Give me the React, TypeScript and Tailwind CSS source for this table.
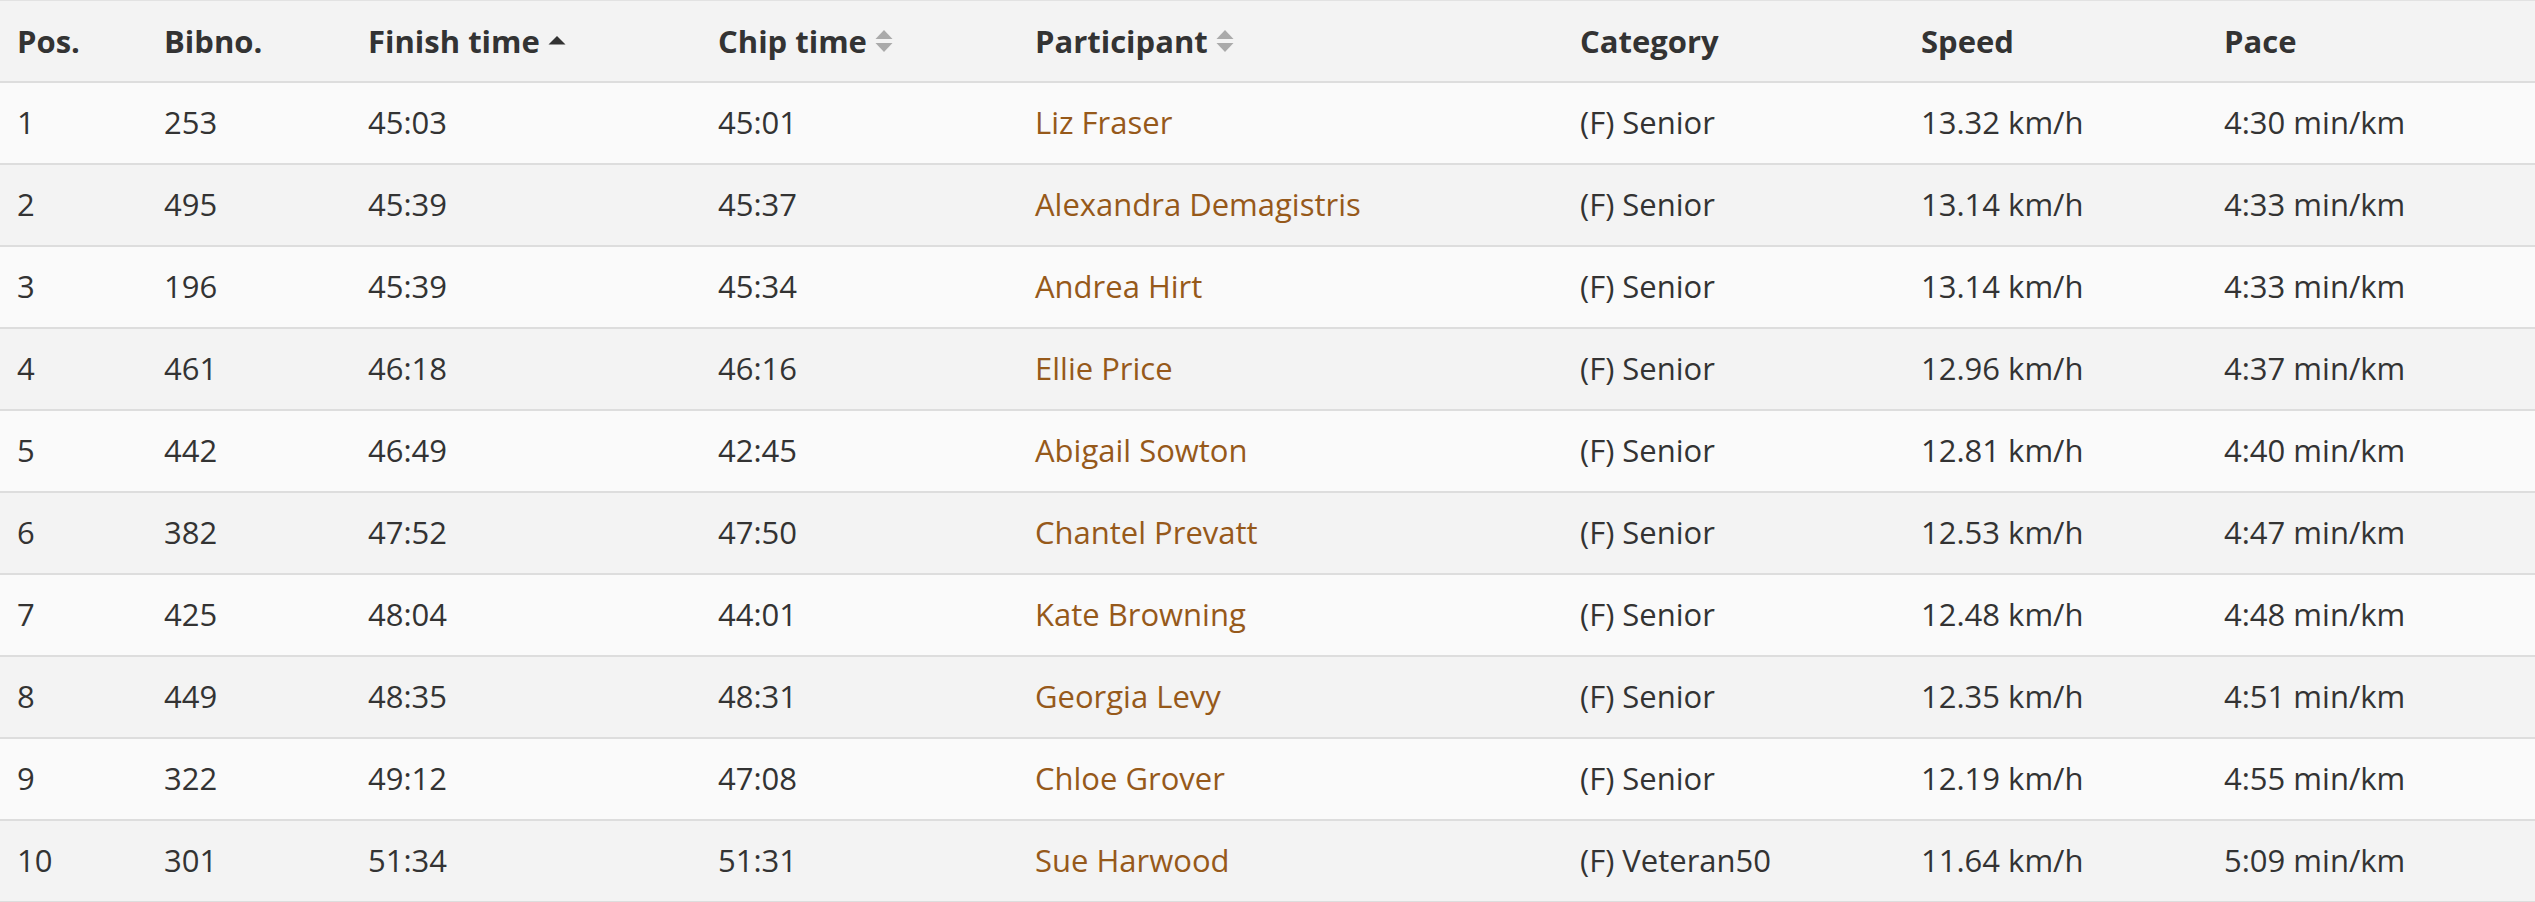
import React from "react";

type Result = {
  pos: number;
  bib: string;
  finish: string;
  chip: string;
  name: string;
  category: string;
  speed: string;
  pace: string;
};

const results: Result[] = [
  { pos: 1, bib: "253", finish: "45:03", chip: "45:01", name: "Liz Fraser", category: "(F) Senior", speed: "13.32 km/h", pace: "4:30 min/km" },
  { pos: 2, bib: "495", finish: "45:39", chip: "45:37", name: "Alexandra Demagistris", category: "(F) Senior", speed: "13.14 km/h", pace: "4:33 min/km" },
  { pos: 3, bib: "196", finish: "45:39", chip: "45:34", name: "Andrea Hirt", category: "(F) Senior", speed: "13.14 km/h", pace: "4:33 min/km" },
  { pos: 4, bib: "461", finish: "46:18", chip: "46:16", name: "Ellie Price", category: "(F) Senior", speed: "12.96 km/h", pace: "4:37 min/km" },
  { pos: 5, bib: "442", finish: "46:49", chip: "42:45", name: "Abigail Sowton", category: "(F) Senior", speed: "12.81 km/h", pace: "4:40 min/km" },
  { pos: 6, bib: "382", finish: "47:52", chip: "47:50", name: "Chantel Prevatt", category: "(F) Senior", speed: "12.53 km/h", pace: "4:47 min/km" },
  { pos: 7, bib: "425", finish: "48:04", chip: "44:01", name: "Kate Browning", category: "(F) Senior", speed: "12.48 km/h", pace: "4:48 min/km" },
  { pos: 8, bib: "449", finish: "48:35", chip: "48:31", name: "Georgia Levy", category: "(F) Senior", speed: "12.35 km/h", pace: "4:51 min/km" },
  { pos: 9, bib: "322", finish: "49:12", chip: "47:08", name: "Chloe Grover", category: "(F) Senior", speed: "12.19 km/h", pace: "4:55 min/km" },
  { pos: 10, bib: "301", finish: "51:34", chip: "51:31", name: "Sue Harwood", category: "(F) Veteran50", speed: "11.64 km/h", pace: "5:09 min/km" },
];

function SortAsc() {
  return (
    <svg width="18" height="24" viewBox="0 0 18 24" className="ml-2 inline-block">
      <path d="M0.5 15.5 L9 7 L17.5 15.5 Z" fill="#333333" />
    </svg>
  );
}

function SortBoth() {
  return (
    <svg width="18" height="24" viewBox="0 0 18 24" className="ml-2 inline-block">
      <path d="M0.5 10 L9 1 L17.5 10 Z" fill="#aaaaaa" />
      <path d="M0.5 14 L9 23 L17.5 14 Z" fill="#aaaaaa" />
    </svg>
  );
}

export default function App() {
  const cell = "pl-[17px] align-middle";
  return (
    <div
      className="w-[2535px] h-[902px] bg-white text-[#333333] text-[31px] overflow-hidden"
      style={{ fontFamily: '"Open Sans", "Liberation Sans", sans-serif' }}
    >
      <table className="w-full border-collapse table-fixed border-t border-[#e2e2e2]">
        <colgroup>
          <col className="w-[147px]" />
          <col className="w-[204px]" />
          <col className="w-[350px]" />
          <col className="w-[317px]" />
          <col className="w-[545px]" />
          <col className="w-[341px]" />
          <col className="w-[303px]" />
          <col />
        </colgroup>
        <thead>
          <tr className="h-[81px] bg-[#f3f3f3] border-b-2 border-[#dddddd] font-bold text-left">
            <th className={cell}>Pos.</th>
            <th className={cell}>Bibno.</th>
            <th className={cell}>
              <span className="inline-flex items-center">
                Finish time
                <SortAsc />
              </span>
            </th>
            <th className={cell}>
              <span className="inline-flex items-center">
                Chip time
                <SortBoth />
              </span>
            </th>
            <th className={cell}>
              <span className="inline-flex items-center">
                Participant
                <SortBoth />
              </span>
            </th>
            <th className={cell}>Category</th>
            <th className={cell}>Speed</th>
            <th className={cell}>Pace</th>
          </tr>
        </thead>
        <tbody>
          {results.map((r, i) => (
            <tr
              key={r.pos}
              className={
                "h-[82px] border-b-2 border-[#dddddd] " +
                (i % 2 === 0 ? "bg-[#fafafa]" : "bg-[#f3f3f3]")
              }
            >
              <td className={cell}>{r.pos}</td>
              <td className={cell}>{r.bib}</td>
              <td className={cell}>{r.finish}</td>
              <td className={cell}>{r.chip}</td>
              <td className={cell}>
                <a href="#" className="text-[#96591a]">
                  {r.name}
                </a>
              </td>
              <td className={cell}>{r.category}</td>
              <td className={cell}>{r.speed}</td>
              <td className={cell}>{r.pace}</td>
            </tr>
          ))}
        </tbody>
      </table>
    </div>
  );
}
